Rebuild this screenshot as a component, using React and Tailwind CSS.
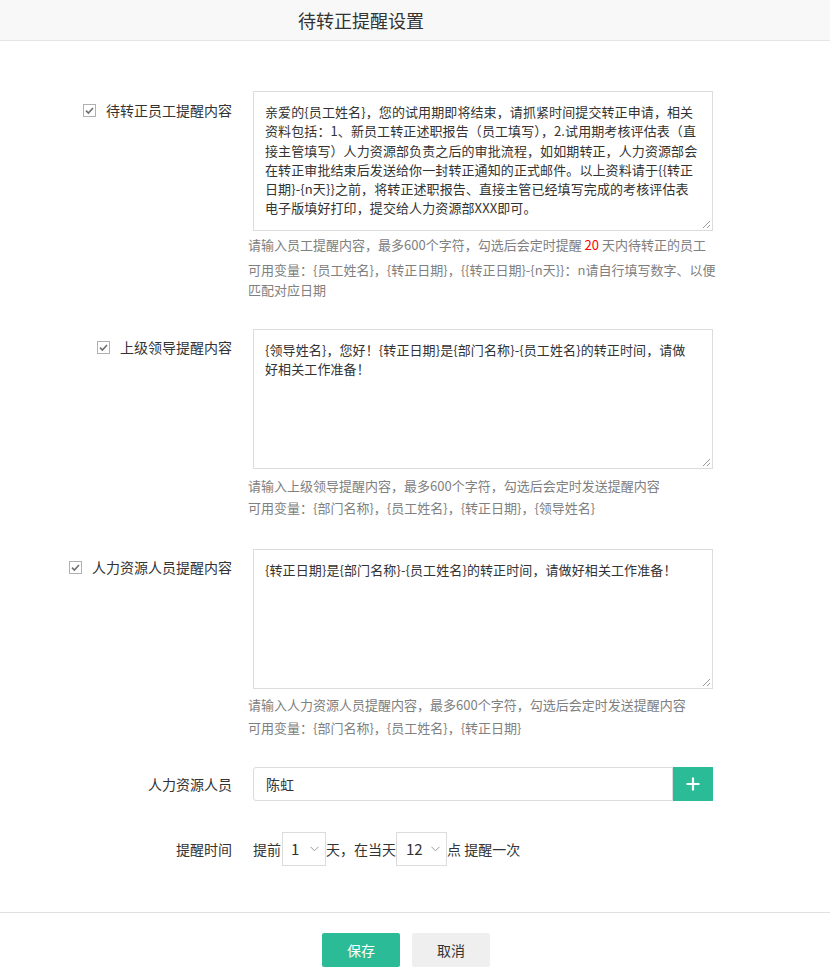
import React from "react";

const FONT = { fontFamily: '"Noto Sans CJK SC", "Noto Sans", "Liberation Sans", sans-serif' };

function CheckBox() {
  return (
    <span className="inline-flex w-[13px] h-[13px] border border-[#b0b0b0] bg-white items-center justify-center shrink-0">
      <svg width="11" height="11" viewBox="0 0 11 11">
        <path d="M2 5.6 L4.4 8 L9 3" fill="none" stroke="#6f6f6f" strokeWidth="1.6" />
      </svg>
    </span>
  );
}

function Grip() {
  return (
    <svg className="absolute right-[1px] bottom-[1px]" width="10" height="10" viewBox="0 0 10 10">
      <path d="M9 2 L2 9 M9 6 L6 9" stroke="#9a9a9a" strokeWidth="1" fill="none" />
    </svg>
  );
}

function FakeTextarea({ lines }) {
  return (
    <div className="relative ml-[5px] w-[460px] h-[140px] border border-[#dcdcdc] bg-white px-[11px] pt-[10px] text-[13px] leading-[19.3px] tracking-[0.1px] text-[#333]">
      {lines.map((l, i) => (
        <div key={i} className="whitespace-nowrap">{l}</div>
      ))}
      <Grip />
    </div>
  );
}

function Chevron() {
  return (
    <svg width="9" height="6" viewBox="0 0 9 6">
      <path d="M0.5 0.8 L4.5 4.8 L8.5 0.8" fill="none" stroke="#9a9a9a" strokeWidth="1" />
    </svg>
  );
}

function Section({ label, lines, helper, pt }) {
  return (
    <div className="flex">
      <div className="w-[232px] shrink-0 flex justify-end">
        <div className={`flex items-center gap-[10px] h-[20px] text-[14px] leading-[20px] text-[#333] ${pt}`}>
          <CheckBox />
          <span className="whitespace-nowrap">{label}</span>
        </div>
      </div>
      <div className="ml-[16px] flex flex-col">
        <FakeTextarea lines={lines} />
        {helper}
      </div>
    </div>
  );
}

export default function App() {
  return (
    <div className="w-[830px] h-[973px] bg-white flex flex-col overflow-hidden" style={FONT}>
      <div className="h-[41px] shrink-0 bg-[#f8f8f8] border-b border-[#e6e6e6] flex items-center pl-[298px] text-[18px] text-[#333]">
        待转正提醒设置
      </div>

      <div className="flex flex-col pt-[50px]">
        <Section
          label="待转正员工提醒内容"
          pt="mt-[9px]"
          lines={[
            "亲爱的{员工姓名}，您的试用期即将结束，请抓紧时间提交转正申请，相关",
            "资料包括：1、新员工转正述职报告（员工填写），2.试用期考核评估表（直",
            "接主管填写）人力资源部负责之后的审批流程，如如期转正，人力资源部会",
            "在转正审批结束后发送给你一封转正通知的正式邮件。以上资料请于{{转正",
            "日期}-{n天}}之前，将转正述职报告、直接主管已经填写完成的考核评估表",
            "电子版填好打印，提交给人力资源部XXX即可。",
          ]}
          helper={
            <div className="text-[13px] text-[#808080]">
              <p className="mt-[4px] leading-[20px] whitespace-nowrap">
                请输入员工提醒内容，最多600个字符，勾选后会定时提醒 <span className="text-[#ff0000]">20</span> 天内待转正的员工
              </p>
              <p className="mt-[5px] leading-[19.5px]">
                <span className="block whitespace-nowrap">可用变量：{"{员工姓名}"}，{"{转正日期}"}，{"{{转正日期}-{n天}}"}：n请自行填写数字、以便</span>
                <span className="block whitespace-nowrap">匹配对应日期</span>
              </p>
            </div>
          }
        />

        <div className="mt-[30px]">
          <Section
            label="上级领导提醒内容"
            pt="mt-[8px]"
            lines={[
              "{领导姓名}，您好！{转正日期}是{部门名称}-{员工姓名}的转正时间，请做",
              "好相关工作准备！",
            ]}
            helper={
              <div className="text-[13px] text-[#808080]">
                <p className="mt-[7px] leading-[20px] whitespace-nowrap">
                  请输入上级领导提醒内容，最多600个字符，勾选后会定时发送提醒内容
                </p>
                <p className="mt-[2px] leading-[20px] whitespace-nowrap">
                  可用变量：{"{部门名称}"}，{"{员工姓名}"}，{"{转正日期}"}，{"{领导姓名}"}
                </p>
              </div>
            }
          />
        </div>

        <div className="mt-[31px]">
          <Section
            label="人力资源人员提醒内容"
            pt="mt-[8px]"
            lines={["{转正日期}是{部门名称}-{员工姓名}的转正时间，请做好相关工作准备！"]}
            helper={
              <div className="text-[13px] text-[#808080]">
                <p className="mt-[6px] leading-[20px] whitespace-nowrap">
                  请输入人力资源人员提醒内容，最多600个字符，勾选后会定时发送提醒内容
                </p>
                <p className="mt-[3px] leading-[20px] whitespace-nowrap">
                  可用变量：{"{部门名称}"}，{"{员工姓名}"}，{"{转正日期}"}
                </p>
              </div>
            }
          />
        </div>

        <div className="mt-[29px] flex items-center">
          <div className="w-[232px] shrink-0 text-right text-[14px] text-[#333]">人力资源人员</div>
          <div className="ml-[21px] flex">
            <div className="w-[420px] h-[34px] border border-[#dcdcdc] rounded-l-[3px] flex items-center pl-[12px] text-[14px] text-[#333]">
              陈虹
            </div>
            <div className="w-[40px] h-[34px] bg-[#2bbb97] flex items-center justify-center">
              <svg width="14" height="14" viewBox="0 0 14 14">
                <path d="M7 0.5 V13.5 M0.5 7 H13.5" stroke="#fff" strokeWidth="2.2" />
              </svg>
            </div>
          </div>
        </div>

        <div className="mt-[31px] flex items-center">
          <div className="w-[232px] shrink-0 text-right text-[14px] text-[#333]">提醒时间</div>
          <div className="ml-[21px] flex items-center text-[14px] text-[#333] whitespace-nowrap">
            <span>提前</span>
            <div className="ml-[1px] w-[44px] h-[34px] border border-[#dcdcdc] flex items-center justify-between pl-[8px] pr-[6px] text-[15px]">
              <span>1</span>
              <Chevron />
            </div>
            <span>天，在当天</span>
            <div className="w-[51px] h-[34px] border border-[#dcdcdc] flex items-center justify-between pl-[9px] pr-[6px] text-[15px]">
              <span>12</span>
              <Chevron />
            </div>
            <span>点 提醒一次</span>
          </div>
        </div>
      </div>

      <div className="mt-[46px] border-t border-[#e0e0e0] pt-[20px] pl-[322px] flex gap-[12px]">
        <div className="w-[78px] h-[34px] rounded-[2px] bg-[#2bbb97] text-white text-[14px] flex items-center justify-center">保存</div>
        <div className="w-[78px] h-[34px] rounded-[2px] bg-[#efefef] text-[#333] text-[14px] flex items-center justify-center">取消</div>
      </div>
    </div>
  );
}
